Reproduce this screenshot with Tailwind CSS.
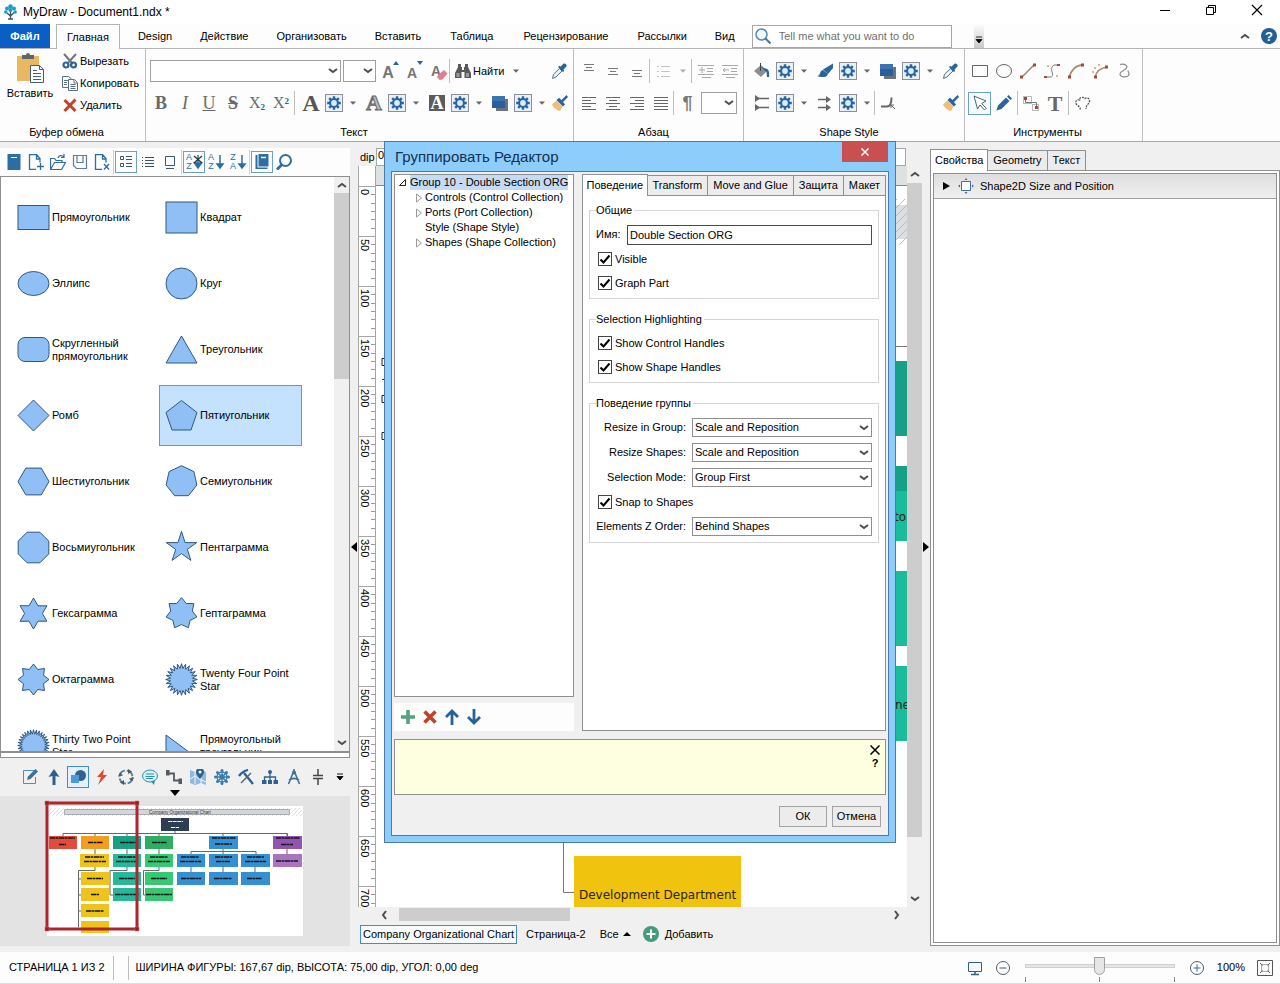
<!DOCTYPE html>
<html lang="ru">
<head>
<meta charset="utf-8">
<title>MyDraw - Document1.ndx *</title>
<script src="https://cdn.jsdelivr.net/npm/@tailwindcss/browser@4"></script>
</head>
<body class="relative flex h-screen min-h-[900px] flex-col overflow-hidden bg-[#f0f0f0] font-['Liberation_Sans',Arial,sans-serif] text-[11px] leading-[13px] text-black">

<!-- Icon library -->
<svg class="hidden" aria-hidden="true">
  <symbol id="gear" viewBox="0 0 18 18">
    <rect x=".5" y=".5" width="17" height="17" fill="#e9f1f8" stroke="#8a9099"/>
    <path d="M9 2.2v13.6M2.2 9h13.6M4.2 4.2l9.6 9.6M13.8 4.2l-9.6 9.6" stroke="#2b639c" stroke-width="2.4"/>
    <circle cx="9" cy="9" r="4.9" fill="#2b639c"/><circle cx="9" cy="9" r="2.9" fill="#d8ebfa"/>
  </symbol>
  <symbol id="caret" viewBox="0 0 8 8"><path d="M1 2.5h6L4 5.8z" fill="#666"/></symbol>
  <symbol id="chev" viewBox="0 0 10 8"><path d="M1 2l4 3 4-3" fill="none" stroke="#4d4d4d" stroke-width="2"/></symbol>
  <symbol id="dropper" viewBox="0 0 16 16">
    <path d="M1.500 15.500l1-4.300L8.500 5.500l2.500 2.500-6 6z" fill="#e4eef5" stroke="#5c7488"/>
    <path d="M7 4l5 5 1.300-1.300-.9-1 3-3.200c1-1.600-1.300-3.800-2.900-2.700l-3.100 3-1.100-1z" fill="#2b639c"/>
  </symbol>
  <symbol id="brush" viewBox="0 0 16 16">
    <path d="M0 9.500l4.500-4 6 6L8 16c-3-.4-7-3.500-8-6.500z" fill="#ecc07a"/>
    <path d="M4.500 5l6.500 6.500 2-2-2-2.500L16 2 14.500 0 9.500 5l-2.500-2.200z" fill="#2b639c"/>
  </symbol>
  <symbol id="stack" viewBox="0 0 16 16">
    <path d="M4 4h12v12H4z" fill="#6a7480"/><path d="M0 1h13v12H0z" fill="#2b5f9a"/><path d="M0 1h13v5H0z" fill="#3a74b2"/>
  </symbol>
  <symbol id="lens" viewBox="0 0 16 16"><circle cx="9.500" cy="6.500" r="5.500" fill="none" stroke="#2d6da3" stroke-width="2"/><path d="M6 10.500L1 15.500" stroke="#2d6da3" stroke-width="2.800"/></symbol>
</svg>

<!-- Title bar -->
<header class="flex h-6 shrink-0 items-center bg-white pl-[3px]">
  <svg class="size-4" viewBox="0 0 16 16"><path d="M7.500 6v9M4 9l3.500 3L11 8.500M5 15h5" stroke="#3b5566" fill="none" stroke-width="1.300"/><g fill="#1c9bc4"><circle cx="7.500" cy="2.500" r="2.200"/><circle cx="4" cy="4.500" r="2"/><circle cx="11" cy="4.500" r="2"/><circle cx="7.500" cy="6" r="2"/><circle cx="2.800" cy="8" r="1.700"/><circle cx="12.200" cy="8" r="1.700"/></g></svg>
  <h1 class="ml-1 text-xs">MyDraw - Document1.ndx *</h1>
  <div class="ml-auto flex pb-1">
    <button aria-label="Свернуть" class="grid h-5 w-[46px] place-items-center"><svg class="size-3" viewBox="0 0 12 12"><path d="M1 6.500h10" stroke="#000"/></svg></button>
    <button aria-label="Восстановить" class="grid h-5 w-[46px] place-items-center"><svg class="size-3" viewBox="0 0 12 12"><path d="M1.500 3.500h7v7h-7zM3.500 3V1.500h7v7H9" fill="none" stroke="#000"/></svg></button>
    <button aria-label="Закрыть" class="grid h-5 w-[46px] place-items-center"><svg class="size-3" viewBox="0 0 12 12"><path d="M1 1l10 10M11 1L1 11" stroke="#000" stroke-width="1.200"/></svg></button>
  </div>
</header>

<!-- Ribbon tabs -->
<nav class="flex h-[25px] shrink-0 items-center border-b border-[#b4b4b4] bg-[#fdfdfd]">
  <button class="mr-1.5 h-6 w-[50px] bg-[#0a5fc4] font-bold text-white">Файл</button>
  <button class="-mb-px h-[25px] border border-b-0 border-[#b4b4b4] bg-[#fdfdfd] px-2.5">Главная</button>
  <button class="ml-1 px-[14px]">Design</button>
  <button class="px-[14px]">Действие</button>
  <button class="px-[14px]">Организовать</button>
  <button class="px-[14px]">Вставить</button>
  <button class="px-[15px]">Таблица</button>
  <button class="px-[15px]">Рецензирование</button>
  <button class="px-[14px]">Рассылки</button>
  <button class="pr-[17px] pl-[14px]">Вид</button>
  <label class="flex h-[23px] w-[200px] items-center border border-[#a6a6a6] bg-white pl-0.5">
    <svg class="size-4" viewBox="0 0 16 16"><circle cx="6.500" cy="6.500" r="5.500" fill="#f2f8fc" stroke="#4f8bbb" stroke-width="1.500"/><path d="M10.500 10.500l5 5" stroke="#55718a" stroke-width="2"/></svg>
    <input aria-label="Поиск команд" placeholder="Tell me what you want to do" class="ml-2 min-w-0 flex-1 bg-transparent outline-none placeholder:text-[#707070]">
  </label>
  <button aria-label="Настроить панель" class="ml-[22px] flex h-6 w-2.5 items-end justify-center bg-linear-to-b from-[#fdfdfd] to-[#c9c9c9] pb-1"><svg class="size-2" viewBox="0 0 8 8"><path d="M1 1h6M1 3.500h6L4 7z" stroke="#000" stroke-width=".8"/></svg></button>
  <button aria-label="Свернуть ленту" class="mr-[11px] ml-auto"><svg class="h-2 w-2.5 rotate-180" viewBox="0 0 10 8"><use href="#chev"/></svg></button>
  <button aria-label="Справка" class="mr-[3px] grid size-4 place-items-center rounded-full bg-[#225f97] text-[13px] font-bold text-white">?</button>
</nav>

<!-- Ribbon -->
<section class="flex h-[93px] shrink-0 border-b border-[#a9a9a9] bg-[#fdfdfd]">
  <div class="flex w-[146px] flex-col border-r border-[#bdbdbd]">
    <div class="flex h-[75px] pt-px">
      <button class="flex w-[60px] flex-col items-center pt-[3px]">
        <svg class="h-8 w-[30px]" viewBox="0 0 30 32"><path d="M2 3h22v25H2z" fill="#e9b863"/><path d="M7 6V2h4a2 2 0 0 1 4 0h4v4z" fill="#5f6469"/><path d="M15.500 12.500h9l4 4v13h-13z" fill="#fff" stroke="#44617c"/><path d="M24.500 12.500v4h4M18 17.500h4M18 20.500h8M18 23.500h8M18 26.500h8" stroke="#44617c" fill="none"/></svg>
        <span class="mt-0.5">Вставить</span>
      </button>
      <div class="flex flex-col">
        <button class="flex h-[22px] items-center gap-0.5 pl-0.5"><svg class="size-4" viewBox="0 0 16 16"><path d="M2 1l9 10M14 1L5 11" stroke="#70767c" stroke-width="2"/><circle cx="4" cy="12" r="2.500" fill="none" stroke="#2b639c" stroke-width="2.200"/><circle cx="11.500" cy="12" r="2.500" fill="none" stroke="#2b639c" stroke-width="2.200"/></svg>Вырезать</button>
        <button class="flex h-[22px] items-center gap-0.5 pl-0.5"><svg class="size-4" viewBox="0 0 16 16"><path d="M.5 1.500h6l2.500 2v9H.5zM2 5.500h4M2 7.500h3M2 9.500h3" fill="none" stroke="#587089"/><path d="M6.500 4.500h6l3 3v8h-9z" fill="#fff" stroke="#587089"/><path d="M12 5v3h3M8.500 9.500h5M8.500 11.500h5M8.500 13.500h5" stroke="#587089" fill="none"/></svg>Копировать</button>
        <button class="flex h-[22px] items-center gap-0.5 pl-0.5"><svg class="size-4" viewBox="0 0 16 16"><path d="M2.500 3l11 11M13.500 2.500L2.500 14" stroke="#c1432e" stroke-width="3"/></svg>Удалить</button>
      </div>
    </div>
    <div class="-ml-3 pt-0.5 text-center">Буфер обмена</div>
  </div>

  <div class="flex w-[428px] flex-col border-r border-[#bdbdbd] pt-1.5">
    <div class="flex h-8 items-center pl-1">
      <div class="relative"><select aria-label="Шрифт" class="block h-[22px] w-[191px] appearance-none border border-[#a0a0a0] bg-white"><option></option></select><svg class="pointer-events-none absolute top-[7px] right-[3px] h-2 w-2.5"><use href="#chev"/></svg></div>
      <div class="relative ml-0.5"><select aria-label="Размер" class="block h-[22px] w-[33px] appearance-none border border-[#a0a0a0] bg-white"><option></option></select><svg class="pointer-events-none absolute top-[7px] right-[3px] h-2 w-2.5"><use href="#chev"/></svg></div>
      <button aria-label="Увеличить шрифт" class="relative h-6 w-6 pt-0.5 text-base font-bold text-[#757575]">A<svg class="absolute top-0.5 right-0 h-1 w-2" viewBox="0 0 8 4"><path d="M1 4h6L4 0z" fill="#2b639c"/></svg></button>
      <button aria-label="Уменьшить шрифт" class="relative h-6 w-6 pt-1 text-sm font-bold text-[#757575]">A<svg class="absolute top-0.5 right-0 h-1 w-2" viewBox="0 0 8 4"><path d="M1 0h6L4 4z" fill="#2b639c"/></svg></button>
      <button aria-label="Очистить формат" class="relative h-6 w-6 text-sm font-bold text-[#757575]">A<svg class="absolute right-0 bottom-0.5 size-3" viewBox="0 0 12 12"><path d="M2 6l6-5 3.500 3.500-5 6-3 .5L1 8z" fill="#de7f92"/></svg></button>
      <i class="mr-[5px] ml-px h-6 w-px bg-[#bdbdbd]"></i>
      <button class="flex items-center gap-0.5"><svg class="size-4" viewBox="0 0 16 16" fill="#595959"><path d="M3 1h3v3h1v3h2V4h1V1h3v3l3 6v5H9.500V9h-3v6H0v-5l3-6z"/><path d="M1.500 11h3M11 11h3M1.500 13h3M11 13h3" stroke="#ddd"/></svg>Найти<svg class="ml-1.5 size-2"><use href="#caret"/></svg></button>
      <button aria-label="Пипетка" class="mr-1.5 ml-auto"><svg class="size-4"><use href="#dropper"/></svg></button>
    </div>
    <div class="flex h-8 items-center pl-1 font-['Liberation_Serif',serif] text-lg text-[#6a6a6a]">
      <button class="w-6 pr-0.5 font-bold">B</button><button class="w-6 pr-0.5 italic">I</button><button class="w-6 pr-0.5 underline">U</button><button class="w-6 pr-0.5 font-bold line-through">S</button>
      <button class="w-6 pr-0.5 text-base">X<sub class="text-[9px] font-bold text-[#2b639c]">2</sub></button><button class="w-6 pr-0.5 text-base">X<sup class="text-[9px] font-bold text-[#2b639c]">2</sup></button>
      <i class="h-6 w-px bg-[#bdbdbd]"></i>
      <div class="flex w-[63px] items-center pl-0.5"><button class="w-7 text-2xl font-bold text-[#555]">A</button><svg class="size-[18px]"><use href="#gear"/></svg><svg class="ml-1.5 size-2"><use href="#caret"/></svg></div>
      <div class="flex w-[63px] items-center pl-0.5"><button class="w-7 text-[22px] font-bold text-[#bbb] [-webkit-text-stroke:1px_#666]">A</button><svg class="size-[18px]"><use href="#gear"/></svg><svg class="ml-1.5 size-2"><use href="#caret"/></svg></div>
      <div class="flex w-[63px] items-center pl-0.5"><button class="flex w-7 justify-center"><span class="h-4 w-4 bg-[#5c5c5c] text-lg leading-4 font-bold text-white">A</span></button><svg class="size-[18px]"><use href="#gear"/></svg><svg class="ml-1.5 size-2"><use href="#caret"/></svg></div>
      <div class="flex w-[63px] items-center pl-0.5"><button aria-label="Тень" class="flex w-7 justify-center"><svg class="size-4"><use href="#stack"/></svg></button><svg class="size-[18px]"><use href="#gear"/></svg><svg class="ml-1.5 size-2"><use href="#caret"/></svg></div>
      <button aria-label="Кисть" class="ml-[5px]"><svg class="size-4"><use href="#brush"/></svg></button>
    </div>
    <div class="pt-[7px] pr-[11px] text-center">Текст</div>
  </div>

  <div class="flex w-[170px] flex-col border-r border-[#bdbdbd] pt-1.5">
    <div class="flex h-8 items-center pl-[3px]">
      <button aria-label="По верху" class="grid w-6 place-items-center"><svg class="size-4" viewBox="0 0 16 16"><path d="M3 1.500h10M5 4.500h6M3 7.500h10" stroke="#777"/></svg></button>
      <button aria-label="По середине" class="grid w-6 place-items-center"><svg class="size-4" viewBox="0 0 16 16"><path d="M3 5.500h10M5 8.500h6M3 11.500h10" stroke="#777"/></svg></button>
      <button aria-label="По низу" class="grid w-6 place-items-center"><svg class="size-4" viewBox="0 0 16 16"><path d="M3 7.500h10M5 10.500h6M3 13.500h10" stroke="#777"/></svg></button>
      <i class="h-6 w-px bg-[#bdbdbd]"></i>
      <button aria-label="Список" class="flex w-[41px] items-center justify-end gap-2 pr-1"><svg class="size-4" viewBox="0 0 16 16"><path d="M6 3.500h9M6 8.500h9M6 13.500h9M2 3.500h2M2 8.500h2M2 13.500h2" stroke="#c4c4c4"/></svg><svg class="size-2 opacity-50"><use href="#caret"/></svg></button>
      <i class="h-6 w-px bg-[#bdbdbd]"></i>
      <button aria-label="Уменьшить отступ" class="grid w-6 place-items-center pl-1"><svg class="size-4" viewBox="0 0 16 16"><path d="M0 2.500h16M9 5.500h6M9 8.500h6M0 11.500h16M4 14.500h9M1 7h6M4 4v6" stroke="#a8a8a8"/></svg></button>
      <button aria-label="Увеличить отступ" class="grid w-6 place-items-center pl-1"><svg class="size-4" viewBox="0 0 16 16"><path d="M0 2.500h16M9 5.500h6M9 8.500h6M0 11.500h16M4 14.500h9M1 7h6M3 5L1 7l2 2" stroke="#a8a8a8" fill="none"/></svg></button>
    </div>
    <div class="flex h-8 items-center pl-[3px]">
      <button aria-label="Влево" class="grid w-6 place-items-center"><svg class="size-4" viewBox="0 0 16 16"><path d="M1 2.500h14M1 5.500h9M1 8.500h14M1 11.500h9M1 14.500h14" stroke="#666"/></svg></button>
      <button aria-label="По центру" class="grid w-6 place-items-center"><svg class="size-4" viewBox="0 0 16 16"><path d="M1 2.500h14M4 5.500h8M1 8.500h14M4 11.500h8M1 14.500h14" stroke="#666"/></svg></button>
      <button aria-label="Вправо" class="grid w-6 place-items-center"><svg class="size-4" viewBox="0 0 16 16"><path d="M1 2.500h14M6 5.500h9M1 8.500h14M6 11.500h9M1 14.500h14" stroke="#666"/></svg></button>
      <button aria-label="По ширине" class="grid w-6 place-items-center"><svg class="size-4" viewBox="0 0 16 16"><path d="M1 2.500h14M1 5.500h14M1 8.500h14M1 11.500h14M1 14.500h14" stroke="#666"/></svg></button>
      <i class="h-6 w-px bg-[#bdbdbd]"></i>
      <button class="w-[27px] text-lg font-bold text-[#777]">¶</button>
      <div class="relative"><select aria-label="Интервал" class="block h-[22px] w-9 appearance-none border border-[#a0a0a0] bg-white"><option></option></select><svg class="pointer-events-none absolute top-[7px] right-[3px] h-2 w-2.5"><use href="#chev"/></svg></div>
    </div>
    <div class="pt-[7px] pr-2.5 text-center">Абзац</div>
  </div>

  <div class="flex w-[221px] flex-col border-r border-[#bdbdbd] pt-1.5">
    <div class="flex h-8 items-center pl-1">
      <div class="flex w-[63px] items-center"><button aria-label="Заливка" class="flex w-7 justify-center"><svg class="size-4" viewBox="0 0 16 16"><path d="M0 8l7-6 6 6-6 6z" fill="#8b8f94"/><path d="M6.500 0v8" stroke="#444"/><path d="M7 4l6 2c2 1 2.500 4 2 8h-2l-.5-5z" fill="#2b639c"/></svg></button><svg class="size-[18px]"><use href="#gear"/></svg><svg class="ml-1.5 size-2"><use href="#caret"/></svg></div>
      <div class="flex w-[63px] items-center"><button aria-label="Контур" class="flex w-7 justify-center"><svg class="size-4" viewBox="0 0 16 16"><path d="M0 13c4 0 2-5 6-6l5 4c-1 4-7 3.500-11 2z" fill="#2b639c"/><path d="M6 6.500l10-6V5l-5 6z" fill="#2b639c"/></svg></button><svg class="size-[18px]"><use href="#gear"/></svg><svg class="ml-1.5 size-2"><use href="#caret"/></svg></div>
      <div class="flex w-[63px] items-center"><button aria-label="Тень фигуры" class="flex w-7 justify-center"><svg class="size-4"><use href="#stack"/></svg></button><svg class="size-[18px]"><use href="#gear"/></svg><svg class="ml-1.5 size-2"><use href="#caret"/></svg></div>
      <button aria-label="Пипетка фигуры" class="ml-[5px]"><svg class="size-4"><use href="#dropper"/></svg></button>
    </div>
    <div class="flex h-8 items-center pl-1">
      <div class="flex w-[63px] items-center"><button aria-label="Начало стрелки" class="flex w-7 justify-center"><svg class="size-4" viewBox="0 0 16 16"><path d="M3 3.500h12M3 12.500h12" stroke="#666" stroke-width="1.500"/><path d="M1 0l5 3.500L1 7zM1 9l5 3.500L1 16z" fill="#666"/></svg></button><svg class="size-[18px]"><use href="#gear"/></svg><svg class="ml-1.5 size-2"><use href="#caret"/></svg></div>
      <div class="flex w-[63px] items-center"><button aria-label="Конец стрелки" class="flex w-7 justify-center"><svg class="size-4" viewBox="0 0 16 16"><path d="M1 4.500h10M1 12.500h10" stroke="#666" stroke-width="1.500"/><path d="M9 1l5 3.500L9 8zM9 9l5 3.500L9 16z" fill="#666"/></svg></button><svg class="size-[18px]"><use href="#gear"/></svg><svg class="ml-1.5 size-2"><use href="#caret"/></svg></div>
      <i class="h-6 w-px bg-[#bdbdbd]"></i>
      <button aria-label="Скругление" class="ml-1.5"><svg class="size-4" viewBox="0 0 16 16"><path d="M0 11.500h6c3 0 4.500-2 4.500-9" fill="none" stroke="#666" stroke-width="2"/><path d="M10 10l4 4M10 13v-3h3" fill="none" stroke="#666"/></svg></button>
      <button aria-label="Кисть фигуры" class="mr-[5px] ml-auto"><svg class="size-4"><use href="#brush"/></svg></button>
    </div>
    <div class="pt-[7px] pr-2.5 text-center">Shape Style</div>
  </div>

  <div class="flex w-[178px] flex-col border-r border-[#bdbdbd] pt-1.5">
    <div class="flex h-8 items-center pl-[3px]">
      <button aria-label="Прямоугольник" class="grid w-6 place-items-center"><svg class="size-4" viewBox="0 0 16 16"><path d="M.5 2.500h15v11H.5z" fill="none" stroke="#666"/></svg></button>
      <button aria-label="Эллипс" class="grid w-6 place-items-center"><svg class="size-4" viewBox="0 0 16 16"><ellipse cx="8" cy="8" rx="7.500" ry="6.500" fill="none" stroke="#666"/></svg></button>
      <button aria-label="Линия" class="grid w-6 place-items-center"><svg class="size-4" viewBox="0 0 16 16"><path d="M2 14L14 2" stroke="#a57d6b" stroke-width="1.500"/><path d="M0 12.500h3v3H0zM13 .5h3v3h-3z" fill="#a5473a"/></svg></button>
      <button aria-label="Полилиния" class="grid w-6 place-items-center"><svg class="size-4" viewBox="0 0 16 16"><path d="M1 14h5c3 0 3-2 2-5s0-7 3-7h4" stroke="#777" fill="none"/><path d="M0 13h3v2H0zM13 1h3v2h-3z" fill="#a5473a"/><path d="M3 2h2v2H3zM12 12h2v2h-2z" fill="#e5b87a"/></svg></button>
      <button aria-label="Дуга" class="grid w-6 place-items-center"><svg class="size-4" viewBox="0 0 16 16"><path d="M1.500 14C3 7 8 2 15 2" stroke="#a98b72" stroke-width="1.800" fill="none"/><path d="M0 12.500h3v3H0zM13 .5h3v3h-3z" fill="#a5473a"/></svg></button>
      <button aria-label="Кривая" class="grid w-6 place-items-center"><svg class="size-4" viewBox="0 0 16 16"><path d="M3.500 14C4 8 9 5 15 4" stroke="#a98b72" stroke-width="1.500" fill="none"/><path d="M2 12.500h3v3H2zM13 2.500h3v3h-3z" fill="#a5473a"/><path d="M6 1h2v2H6zM2 4h2v2H2zM0 8h2v2H0z" fill="#e5b87a"/></svg></button>
      <button aria-label="Свободная кривая" class="grid w-6 place-items-center"><svg class="size-4" viewBox="0 0 16 16"><path d="M4 1.500c5-1 8 1 6.500 3.500S4 8 4 11s7 4 8.500 1.500-.5-3-.5-5" stroke="#888" stroke-width="1.200" fill="none"/></svg></button>
    </div>
    <div class="flex h-8 items-center pl-[3px]">
      <button aria-label="Указатель" class="grid size-[23px] place-items-center border border-[#6ba0cb] bg-[#f5fafd]"><svg class="size-4" viewBox="0 0 16 16"><path d="M2 1l3.500 13L8 10l4.500 5 1.700-1.700-4.500-4.800L14 6z" fill="#fff" stroke="#4d6478"/></svg></button>
      <button aria-label="Карандаш" class="grid w-[26px] place-items-center"><svg class="size-4" viewBox="0 0 16 16"><path d="M.5 15.500l1.500-5 8-8 3.500 3.500-8 8zM11 1.500L12.500 0 16 3.500 14.500 5z" fill="#2b639c"/></svg></button>
      <i class="h-6 w-px bg-[#bdbdbd]"></i>
      <button aria-label="Соединитель" class="grid w-[26px] place-items-center"><svg class="size-4" viewBox="0 0 16 16"><path d="M.5 1.500h8v7h-8zM9.500 9.500h6v6h-6z" fill="none" stroke="#777" stroke-dasharray="1 1"/><path d="M2.500 4v3.500h11V12" fill="none" stroke="#777"/><path d="M1 2h3v3H1zM12 11h3v3h-3z" fill="#a5473a"/></svg></button>
      <button class="w-6 pr-0.5 font-['Liberation_Serif',serif] text-[22px] font-bold text-[#686868]">T</button>
      <i class="h-6 w-px bg-[#bdbdbd]"></i>
      <button aria-label="Лассо" class="grid w-7 place-items-center"><svg class="size-4" viewBox="0 0 16 16"><path d="M5 14.500c1-2-1-3-3-4.500-3-3 0-6 2.500-5C4 2 9 1.500 10 3.500c2-1.500 5 0 4.500 3C14 9 11 10 11 14" fill="none" stroke="#555" stroke-width="1.300" stroke-dasharray="2 1"/></svg></button>
    </div>
    <div class="pt-[7px] pr-3 text-center">Инструменты</div>
  </div>
</section>

<!-- Workspace -->
<main class="flex min-h-0 flex-1 pt-1.5 pb-1.5">

  <aside class="flex w-[350px] shrink-0 flex-col">
    <div class="flex h-[28px] items-center bg-[#fdfdfd] pl-[3px] text-[#2d6da3]">
      <button aria-label="Библиотека" class="grid size-[22px] place-items-center"><svg class="size-4" viewBox="0 0 16 16"><path d="M1.500 0h13v16h-13z" fill="#2d6da3"/><path d="M5 3.500h6" stroke="#fff"/></svg></button>
      <button aria-label="Новая" class="grid size-[22px] place-items-center"><svg class="size-4" viewBox="0 0 16 16"><path d="M8 15.500H1.500v-15h7l3.500 4v4M8.500 .5v4.500H12M12.500 9v7M9 12.500h7" fill="none" stroke="currentColor" stroke-width="1.300"/></svg></button>
      <button aria-label="Открыть" class="grid size-[22px] place-items-center"><svg class="size-4" viewBox="0 0 16 16"><path d="M.5 15.500v-11h4l1.500 2h6v2M.5 15.500l4-7h11l-4 7zM8 4c1-3 4-3 6-1M14 0v3.500h-3" fill="none" stroke="currentColor" stroke-width="1.200"/></svg></button>
      <button aria-label="Сохранить" class="grid size-[22px] place-items-center"><svg class="size-4" viewBox="0 0 16 16"><path d="M1.500 1.500h13v13h-10l-3-3zM5 1.500v7h6v-7" fill="none" stroke="#5d7d99" stroke-width="1.200"/></svg></button>
      <button aria-label="Закрыть" class="grid size-[22px] place-items-center"><svg class="size-4" viewBox="0 0 16 16"><path d="M8 15.500H1.500v-15h7l3.500 4v4M8.500 .5v4.500H12M10 10l5 5.500M15 10l-5 5.500" fill="none" stroke="currentColor" stroke-width="1.300"/></svg></button>
      <i class="mr-px h-6 w-px bg-[#c3d3df]"></i>
      <button aria-label="Значки и подписи" class="grid size-[22px] place-items-center border border-[#6ba0cb]"><svg class="size-4" viewBox="0 0 16 16"><path d="M2.500 2.500h3v3h-3zM2.500 9.500h3v3h-3zM8 2.500h6M8 5.500h6M8 9.500h6M8 12.500h6" fill="none" stroke="#3e566b"/></svg></button>
      <button aria-label="Список" class="grid size-[22px] place-items-center"><svg class="size-4" viewBox="0 0 16 16"><path d="M5 3.500h9M5 6.500h9M5 9.500h9M5 12.500h9M2 3.500h1M2 6.500h1M2 9.500h1M2 12.500h1" stroke="#3e566b"/></svg></button>
      <button aria-label="Значки" class="grid size-[22px] place-items-center"><svg class="size-4" viewBox="0 0 16 16"><path d="M3.500 2.500h9v9h-9zM4 14.500h8" fill="none" stroke="#3e566b"/></svg></button>
      <i class="mr-px h-6 w-px bg-[#c3d3df]"></i>
      <button class="flex size-[22px] items-center justify-center border border-[#6ba0cb] text-[9px] leading-[9px]"><span class="w-2">A<br>Z</span><svg class="h-4 w-2.5" viewBox="0 0 10 16"><path d="M5 1v12M1.500 9L5 14l3.500-5z" fill="currentColor" stroke="currentColor" stroke-width="1.500"/><path d="M1 2l8 7M9 2L1 9" stroke="#233" stroke-width="1.200"/></svg></button>
      <button class="flex size-[22px] items-center justify-center text-[9px] leading-[9px]"><span class="w-2">A<br>Z</span><svg class="h-4 w-2.5" viewBox="0 0 10 16"><path d="M5 1v12M2 10l3 4 3-4z" fill="currentColor" stroke="currentColor" stroke-width="1.500"/></svg></button>
      <button class="flex size-[22px] items-center justify-center text-[9px] leading-[9px]"><span class="w-2">Z<br>A</span><svg class="h-4 w-2.5" viewBox="0 0 10 16"><path d="M5 1v12M2 10l3 4 3-4z" fill="currentColor" stroke="currentColor" stroke-width="1.500"/></svg></button>
      <i class="mr-px h-6 w-px bg-[#c3d3df]"></i>
      <button aria-label="Библиотеки" class="grid size-[22px] place-items-center border border-[#6ba0cb]"><svg class="size-4" viewBox="0 0 16 16"><path d="M1.500 1h2v12.500h10V15h-12z" fill="#2d6da3"/><path d="M4.500 0h10v12.500h-10z" fill="#2d6da3"/><path d="M7 3.500h5" stroke="#fff" stroke-width="1.500"/></svg></button>
      <button aria-label="Найти фигуру" class="grid size-[22px] place-items-center"><svg class="size-4"><use href="#lens"/></svg></button>
    </div>
    <div class="flex min-h-0 flex-1 border border-b-2 border-[#8f8f8f] bg-white">
      <div class="min-w-0 flex-1 overflow-hidden">
        <ul id="shapes" class="grid grid-cols-[143px_143px] gap-[5px] pt-[10px] pl-[10px]"></ul>
      </div>
      <div class="flex w-[15px] flex-col items-center bg-[#f0f0f0] pb-1">
        <svg class="my-1 h-2 w-2.5 rotate-180"><use href="#chev"/></svg>
        <div class="h-[186px] w-full bg-[#cdcdcd]"></div>
        <svg class="mt-auto h-2 w-2.5"><use href="#chev"/></svg>
      </div>
    </div>
    <div class="h-[5px] border border-t-0 border-[#8f8f8f] bg-white"></div>
    <div class="relative flex h-[38px] items-center pl-[18px]">
      <button aria-label="Правка" class="grid size-6 place-items-center"><svg class="size-4" viewBox="0 0 16 16"><path d="M12 1.500H1.500v13h12V8" fill="none" stroke="#4e8ebf"/><path d="M5 11l1-3.500L13.500 0 16 2.500 8.500 10z" fill="#3f6f95"/></svg></button>
      <button aria-label="Стрелки" class="grid size-6 place-items-center"><svg class="size-4" viewBox="0 0 16 16"><path d="M8 0l5.500 8L9.500 7v9h-3V7l-4 1z" fill="#325f8a"/></svg></button>
      <button aria-label="Базовые фигуры" class="grid size-6 place-items-center"><span class="grid size-[22px] place-items-center border border-[#3f8fcd] bg-[#e5f1fa]"><svg class="size-4" viewBox="0 0 16 16"><circle cx="10.500" cy="6.500" r="5.500" fill="#33628d"/><path d="M1 6h8v8H1z" fill="#4b9bdb"/></svg></span></button>
      <button aria-label="Электрика" class="grid size-6 place-items-center"><svg class="size-4" viewBox="0 0 16 16"><path d="M10 0L3 8h4l-3 8 9-10H9z" fill="#e5482d"/></svg></button>
      <button aria-label="Цикл" class="grid size-6 place-items-center"><svg class="size-4" viewBox="0 0 16 16"><circle cx="8" cy="8" r="6.500" fill="none" stroke="#4d7ea6" stroke-width="1.800" stroke-dasharray="8.200 2"/><path d="M10 0l4 2.500L10 5zM16 8.500l-2 4-3-3zM6 16l-4-2.500L6 11zM0 7.500l2-4 3 3z" fill="#55585c"/></svg></button>
      <button aria-label="Выноски" class="grid size-6 place-items-center"><svg class="size-4" viewBox="0 0 16 16"><ellipse cx="8" cy="7" rx="7.500" ry="6" fill="#d9f0f4" stroke="#2e8fae"/><path d="M9 12.500l3 3.500 1-5z" fill="#2e8fae"/><path d="M4 5h8M3.500 7.500h9M4 9.500h7" stroke="#2e8fae"/></svg></button>
      <button aria-label="Соединители" class="grid size-6 place-items-center"><svg class="size-4" viewBox="0 0 16 16"><path d="M2 4.500h6v7h6" fill="none" stroke="#545a60" stroke-width="1.800"/><path d="M0 1h3.500v5.500H0zM12.500 9.500H16V15h-3.500z" fill="#545a60"/></svg></button>
      <button aria-label="Карты" class="grid size-6 place-items-center"><svg class="size-4" viewBox="0 0 16 16"><path d="M0 1l5 2 6-2 5 2v13l-5-2-6 2-5-2z" fill="#8dbbe0"/><path d="M5 3v12M0 10l5-3 4 3 7 3M11 9v6" stroke="#f0f5fa" fill="none"/><path d="M10 10C8 7 6 5 6 3a4 4 0 0 1 8 0c0 2-2 4-4 7z" fill="#2d5f8f"/><circle cx="10" cy="3" r="1.500" fill="#fff"/></svg></button>
      <button aria-label="Сеть" class="grid size-6 place-items-center"><svg class="size-4" viewBox="0 0 16 16"><g fill="none" stroke="#397cb1" stroke-width="1.300"><circle cx="8" cy="8" r="2"/><circle cx="8" cy="8" r="5"/><path d="M8 1v14M1 8h14M3 3l10 10M13 3L3 13"/></g><g fill="#397cb1"><circle cx="8" cy="1.500" r="1.500"/><circle cx="8" cy="14.500" r="1.500"/><circle cx="1.500" cy="8" r="1.500"/><circle cx="14.500" cy="8" r="1.500"/><circle cx="3.500" cy="3.500" r="1.500"/><circle cx="12.500" cy="3.500" r="1.500"/><circle cx="3.500" cy="12.500" r="1.500"/><circle cx="12.500" cy="12.500" r="1.500"/></g></svg></button>
      <button aria-label="Инструменты" class="grid size-6 place-items-center"><svg class="size-4" viewBox="0 0 16 16"><path d="M1 7c2-3 5-5 9-6M6 4l9 11" stroke="#2d6192" fill="none" stroke-width="2.300"/><path d="M13 4L3 14" stroke="#5d6266" stroke-width="1.500"/></svg></button>
      <button aria-label="Организация" class="grid size-6 place-items-center"><svg class="size-4" viewBox="0 0 16 16"><path d="M8 3v9M2.500 12V8h11v4" fill="none" stroke="#2d6192" stroke-width="1.300"/><circle cx="8" cy="3" r="2" fill="#2d6192"/><path d="M0 11h4.500v4H0zM6 11h4v4H6zM11.500 11H16v4h-4.500z" fill="#2d6192"/></svg></button>
      <button aria-label="Циркуль" class="grid size-6 place-items-center"><svg class="size-4" viewBox="0 0 16 16"><path d="M8 0v3M7 4L2.500 15M9 4l4.500 11M3 11c3-2 7-2 10 0" fill="none" stroke="#466e93" stroke-width="1.600"/><circle cx="8" cy="3.500" r="2" fill="#466e93"/></svg></button>
      <button aria-label="Схемы" class="grid size-6 place-items-center"><svg class="size-4" viewBox="0 0 16 16"><path d="M8 0v6M8 10v6M3 6.500h10M3 9.500h10" stroke="#444" stroke-width="1.500"/></svg></button>
      <button aria-label="Ещё" class="grid h-6 w-5 place-items-center"><svg class="size-2" viewBox="0 0 8 8"><path d="M1 1h6M1 3.500h6L4 7z" stroke="#000" stroke-width=".9"/></svg></button>
      <svg class="absolute bottom-0 left-[169px] h-[6px] w-3" viewBox="0 0 12 6"><path d="M1 0h10L6 6z"/></svg>
    </div>
    <div class="flex h-[150px] justify-center bg-[#e3e3e3]">
      <svg class="h-[150px] w-[350px]" viewBox="0 796 350 150">
        <defs><pattern id="hatch" width="4" height="4" patternUnits="userSpaceOnUse"><path d="M0 4L4 0" stroke="#c6c9cc" stroke-width=".6"/></pattern></defs>
        <path d="M47 806h256v130H47z" fill="#fff"/>
        <path d="M48 808h254v8H48z" fill="url(#hatch)"/><path d="M64.500 809.500h225v5h-225z" fill="#d3d6d9" stroke="#a9adb1"/>
        <text x="149" y="814" font-size="4.500" fill="#333">Company Organizational Chart</text>
        <path d="M175 830v3M63 836v-2.500h224.500v2.500M95 834v20M127 834v20M159 834v20M223 834v17M287 834v20M191 854v-2.500h65v2.500M223 851v24M191 867v5M255 867v5M95 866v4.500H78.500V927M127 867v3.500h-17V895h4M159 867v3.500h-15.500V895h3M78 879h4M78 895h4M78 911h4" fill="none" stroke="#666"/>
        <path d="M161 818h28v13h-28z" fill="#2c3e50"/>
        <path d="M49 836h28v13H49z" fill="#e04d3c"/>
        <path d="M81 836h28v13H81z" fill="#f39c1f"/>
        <path d="M80 854h29v13H80zM81 872h28v13H81zM81 888h28v13H81zM81 904h28v13H81zM81 921h28v12H81z" fill="#eec31c"/>
        <path d="M113 836h28v13h-28z" fill="#1b9f85"/>
        <path d="M113 854h28v13h-28zM113 872h28v13h-28zM113 888h28v13h-28z" fill="#25b99a"/>
        <path d="M145 836h28v13h-28z" fill="#2eae63"/>
        <path d="M145 854h28v13h-28zM145 872h28v13h-28zM145 888h28v13h-28z" fill="#37c972"/>
        <path d="M209 836h29v13h-29zM177 854h28v13h-28zM209 854h29v13h-29zM241 854h29v13h-29zM177 872h28v13h-28zM209 872h29v13h-29zM241 872h29v13h-29z" fill="#3490d2"/>
        <path d="M273 836h29v13h-29z" fill="#9353b0"/><path d="M273 854h29v13h-29z" fill="#a873c0"/>
        <path d="M168 821.500h15M171 827.500h8" stroke="#fff" stroke-width="1.200" stroke-dasharray="4 .6"/>
        <path d="M50 838h25M59 844.500h7M88 842.500h15M120 842.500h16M152 842.500h15M212 838h24M215 844h17M276 838h24M281 844.500h12M85 857h19M84 861.500h22M118 857h18M116 861.500h22M150 857h18M148 861.500h22M181 857h18M180 861.500h21M215 857h17M216 861.500h14M247 857h17M245 861.500h21M276 861h22M87 878.500h16M119 878.500h16M151 878.500h16M181 878.500h20M214 878.500h18M247 878.500h15M91 894.500h8M115 894.500h24M146 894.500h26M86 911h18" stroke="#14181c" stroke-width="1.300" stroke-dasharray="5 .5 3 .5"/>
        <rect x="47" y="803" width="90" height="126" fill="none" stroke="#b0242c" stroke-width="3"/>
        <path d="M45 801h4v4h-4zM135 801h4v4h-4zM45 927h4v4h-4zM135 927h4v4h-4z" fill="#9d1b22" stroke="#d66" stroke-width=".5"/>
      </svg>
    </div>
  </aside>

  <div class="grid w-2 shrink-0 place-items-center"><svg class="h-2.5 w-[6px]" viewBox="0 0 6 10"><path d="M6 0v10L0 5z"/></svg></div>

  <!-- Drawing canvas -->
  <section class="flex min-w-0 flex-1 flex-col">
    <div class="flex h-[18px]">
      <span class="w-[18px] pt-[3px] pl-0.5">dip</span>
      <div class="flex-1 border border-[#a6a6a6] bg-white pl-px">0</div>
      <div class="w-4"></div>
    </div>
    <div class="flex min-h-0 flex-1">
      <div id="ruler" class="w-[18px] shrink-0 overflow-hidden border-x border-[#a6a6a6] bg-white"></div>
      <div class="relative min-w-0 flex-1 overflow-hidden bg-[#e0e0e0]">
        <svg class="absolute top-0 left-0 h-full w-full" viewBox="376 166 531 741" preserveAspectRatio="xMinYMin slice">
          <defs><pattern id="hatch2" width="8" height="8" patternUnits="userSpaceOnUse"><path d="M0 8L8 0" stroke="#b9bdc2"/></pattern></defs>
          <path d="M376 185.500h531V950H376z" fill="#fff"/><path d="M376 185.500h531" stroke="#888"/>
          <path d="M400 205h507v34H400z" fill="#dcdee0"/><path d="M400 199h507v46H400z" fill="url(#hatch2)"/>
          <path d="M386 346.500h521" stroke="#777"/>
          <path d="M740 361h167v75H740zM740 466h167v25H740z" fill="#16a085"/>
          <path d="M740 491h167v50H740zM740 571h167v75H740zM740 666h167v75H740z" fill="#1abc9c"/>
          <path d="M386 358.500h-4v7h4M386 395.500h-4v7h4M386 432.500h-4v7h4M382 379.500h4" fill="none" stroke="#222"/>
          <path d="M563.500 700v192.500H574" fill="none" stroke="#777"/>
          <path d="M574 856h167v60H574z" fill="#f0c30f"/>
          <g font-family="DejaVu Sans, Noto Sans, sans-serif" font-size="12" fill="#2b2212"><text x="579" y="899">Development Department</text><text x="894" y="521">to</text><text x="895" y="709">ne</text></g>
        </svg>
      </div>
      <div class="flex w-[15px] shrink-0 flex-col items-center bg-[#f0f0f0] pb-1">
        <svg class="mt-1 mb-[5px] h-2 w-2.5 rotate-180"><use href="#chev"/></svg>
        <div class="h-[654px] w-full bg-[#cdcdcd]"></div>
        <svg class="mt-auto h-2 w-2.5"><use href="#chev"/></svg>
      </div>
    </div>
    <div class="flex h-[15px] items-center pr-5 pl-[21px]">
      <svg class="mr-2.5 h-2 w-2.5 rotate-90"><use href="#chev"/></svg>
      <div class="h-[13px] w-[171px] bg-[#cdcdcd]"></div>
      <svg class="ml-auto h-2 w-2.5 -rotate-90"><use href="#chev"/></svg>
    </div>
    <div class="flex h-6 items-center pl-0.5">
      <button class="h-[19px] border border-[#3f8fcd] bg-[#f6fbfe] px-0.5">Company Organizational Chart</button>
      <button class="ml-[9px]">Страница-2</button>
      <button class="ml-[14px] flex items-center gap-1">Все<svg class="h-1 w-2" viewBox="0 0 8 4"><path d="M0 4h8L4 0z"/></svg></button>
      <button class="ml-3 flex items-center gap-1.5"><svg class="size-4" viewBox="0 0 16 16"><circle cx="8" cy="8" r="8" fill="#479a7d"/><path d="M8 3.500v9M3.500 8h9" stroke="#fff" stroke-width="2"/></svg>Добавить</button>
    </div>
  </section>

  <div class="grid w-2 shrink-0 place-items-center"><svg class="h-2.5 w-[6px]" viewBox="0 0 6 10"><path d="M0 0v10l6-5z"/></svg></div>

  <!-- Properties -->
  <aside class="flex w-[350px] shrink-0 flex-col">
    <div class="flex h-[22px] items-end">
      <button class="relative z-10 -mb-px h-[22px] border border-b-0 border-[#8f8f8f] bg-white px-1">Свойства</button>
      <button class="h-5 border border-b-0 border-l-0 border-[#8f8f8f] bg-[#ececec] px-[5px]">Geometry</button>
      <button class="h-5 border border-b-0 border-l-0 border-[#8f8f8f] bg-[#ececec] px-[5px]">Текст</button>
    </div>
    <div class="flex-1 border border-[#8f8f8f] bg-white p-0.5">
      <div class="h-full border border-[#8f8f8f]">
        <button class="flex h-[25px] w-full items-center border-b border-[#a0a0a0] bg-linear-to-b from-[#dedede] to-[#f0f0f0] pl-[9px]"><svg class="h-2 w-[7px]" viewBox="0 0 7 8"><path d="M0 0v8l7-4z"/></svg>
          <svg class="mr-1.5 ml-2 size-4" viewBox="0 0 16 16"><path d="M3.500 3.500h9v9h-9z" fill="#fff" stroke="#3d6f9e"/><path d="M6.500 2L8 0l1.500 2zM6.500 14L8 16l1.500-2zM2 6.500L0 8l2 1.500zM14 6.500L16 8l-2 1.500z" fill="#3d6f9e"/></svg>Shape2D Size and Position</button>
      </div>
    </div>
  </aside>
</main>

<!-- Status bar -->
<footer class="flex h-8 shrink-0 items-center border-b border-[#dcdcdc] bg-[#fdfdfd] pl-[9px]">
  <span>СТРАНИЦА 1 ИЗ 2</span>
  <i class="ml-2 h-6 w-px bg-[#bdbdbd]"></i><i class="ml-[14px] h-6 w-px bg-[#bdbdbd]"></i>
  <span class="ml-[7px]">ШИРИНА ФИГУРЫ: 167,67 dip, ВЫСОТА: 75,00 dip, УГОЛ: 0,00 deg</span>
  <div class="ml-auto flex items-center pr-[7px]">
    <svg class="size-4" viewBox="0 0 16 16"><path d="M1.500 2.500h13v9h-13z" fill="#f4fafd" stroke="#2f5f86"/><path d="M8 11v3M4 14.500h8" stroke="#2f5f86" stroke-width="1.500"/></svg>
    <button aria-label="Уменьшить масштаб" class="ml-3"><svg class="size-4" viewBox="0 0 16 16"><circle cx="8" cy="8" r="6.500" fill="none" stroke="#4d5d6b"/><path d="M4.500 8h7" stroke="#4d5d6b"/></svg></button>
    <div class="relative mx-[14px] h-7 w-[150px]">
      <input type="range" aria-label="Масштаб" value="50" class="absolute top-0.5 left-0 h-5 w-full appearance-none bg-transparent [&::-webkit-slider-runnable-track]:h-1 [&::-webkit-slider-runnable-track]:border [&::-webkit-slider-runnable-track]:border-[#cfcfcf] [&::-webkit-slider-runnable-track]:bg-[#e6e6e6] [&::-webkit-slider-thumb]:-mt-2 [&::-webkit-slider-thumb]:h-[18px] [&::-webkit-slider-thumb]:w-[11px] [&::-webkit-slider-thumb]:appearance-none [&::-webkit-slider-thumb]:rounded-b-md [&::-webkit-slider-thumb]:border [&::-webkit-slider-thumb]:border-[#a0a0a0] [&::-webkit-slider-thumb]:bg-[#e6e6e6]">
      <div class="absolute inset-x-0 bottom-0 flex justify-between"><i class="h-[5px] w-px bg-[#8a8a8a]"></i><i class="h-[5px] w-px bg-[#8a8a8a]"></i><i class="h-[5px] w-px bg-[#8a8a8a]"></i></div>
    </div>
    <button aria-label="Увеличить масштаб"><svg class="size-4" viewBox="0 0 16 16"><circle cx="8" cy="8" r="6.500" fill="none" stroke="#4d5d6b"/><path d="M4.500 8h7M8 4.500v7" stroke="#3c6c94"/></svg></button>
    <span class="mr-3 ml-3">100%</span>
    <button aria-label="По размеру окна"><svg class="size-4" viewBox="0 0 16 16"><path d="M.5 .5h15v15H.5z" fill="none" stroke="#555"/><path d="M4.500 4.500h7v7h-7z" fill="none" stroke="#555" stroke-dasharray="1 1"/><path d="M3 3l2.500 2.500M13 3l-2.500 2.500M3 13l2.500-2.500M13 13l-2.500-2.500" stroke="#555"/></svg></button>
  </div>
</footer>

<!-- Group designer window -->
<div role="dialog" aria-labelledby="dlg" class="absolute inset-x-0 top-[141px] mx-auto flex h-[702px] w-[512px] flex-col border border-[#4b7ba5] bg-[#8ccdfb] px-1.5 pb-1.5">
  <div class="flex h-[29px] shrink-0 justify-between pr-px pl-1">
    <h2 id="dlg" class="pt-[5px] text-[15px] leading-5 text-[#16304f]">Группировать Редактор</h2>
    <button aria-label="Закрыть окно" class="grid h-5 w-[46px] place-items-center bg-[#c75050]"><svg class="size-2" viewBox="0 0 8 8"><path d="M.5 .5l7 7M7.500 .5l-7 7" stroke="#fff" stroke-width="1.500"/></svg></button>
  </div>
  <div class="flex min-h-0 flex-1 flex-col border border-[#4b7ba5] bg-[#f0f0f0] px-0.5 pt-0.5">
    <div class="flex h-[557px] gap-2">
      <div class="flex w-[180px] shrink-0 flex-col">
        <ul class="flex-1 border border-[#8f8f8f] bg-white pl-1 leading-[15px]">
          <li class="flex items-center gap-1"><svg class="size-[7px]" viewBox="0 0 7 7"><path d="M6.500 .5v6h-6z" fill="none" stroke="#222"/></svg><span class="bg-[#c5dbf5]">Group 10 - Double Section ORG</span></li>
          <li class="flex items-center gap-[3px] pl-[17px]"><svg class="h-2.5 w-1.5" viewBox="0 0 6 10"><path d="M.5 1v8l5-4z" fill="none" stroke="#999"/></svg>Controls (Control Collection)</li>
          <li class="flex items-center gap-[3px] pl-[17px]"><svg class="h-2.5 w-1.5" viewBox="0 0 6 10"><path d="M.5 1v8l5-4z" fill="none" stroke="#999"/></svg>Ports (Port Collection)</li>
          <li class="pl-[26px]">Style (Shape Style)</li>
          <li class="flex items-center gap-[3px] pl-[17px]"><svg class="h-2.5 w-1.5" viewBox="0 0 6 10"><path d="M.5 1v8l5-4z" fill="none" stroke="#999"/></svg>Shapes (Shape Collection)</li>
        </ul>
        <div class="mt-1.5 flex h-7 items-center gap-1.5 bg-[#fdfdfd] pl-1.5">
          <button aria-label="Добавить элемент"><svg class="size-4" viewBox="0 0 16 16"><path d="M8 1v14M1 8h14" stroke="#55a184" stroke-width="3.600"/></svg></button>
          <button aria-label="Удалить элемент"><svg class="size-4" viewBox="0 0 16 16"><path d="M2.500 2.500l11 11M13.500 2.500l-11 11" stroke="#be452c" stroke-width="3.600"/></svg></button>
          <button aria-label="Вверх"><svg class="size-4" viewBox="0 0 16 16"><path d="M8 16V2M2 8l6-6 6 6" stroke="#25629c" stroke-width="2.800" fill="none"/></svg></button>
          <button aria-label="Вниз"><svg class="size-4" viewBox="0 0 16 16"><path d="M8 0v14M2 8l6 6 6-6" stroke="#25629c" stroke-width="2.800" fill="none"/></svg></button>
        </div>
      </div>
      <div class="flex min-w-0 flex-1 flex-col">
        <div class="flex h-[21px] shrink-0 items-end">
          <button class="relative z-10 -mb-px h-[22px] flex-1 border border-b-0 border-[#8f8f8f] bg-white">Поведение</button>
          <button class="h-5 border-t border-r border-[#8f8f8f] bg-[#ececec] px-[5px]">Transform</button>
          <button class="h-5 border-t border-r border-[#8f8f8f] bg-[#ececec] px-[5px]">Move and Glue</button>
          <button class="h-5 border-t border-r border-[#8f8f8f] bg-[#ececec] px-[5px]">Защита</button>
          <button class="h-5 border-t border-r border-[#8f8f8f] bg-[#ececec] px-[5px]">Макет</button>
        </div>
        <form class="flex flex-1 flex-col gap-[13px] border border-[#8f8f8f] bg-white px-1.5 pt-[7px]">
          <fieldset class="border border-[#d5d5d5] px-1.5 pb-[3px]">
            <legend class="pr-0.5 leading-[14px]">Общие</legend>
            <div class="mt-[5px] flex h-[25px] items-center"><label for="nm" class="w-[31px]">Имя:</label><input id="nm" value="Double Section ORG" class="h-5 min-w-0 flex-1 border border-[#4a4a4a] px-0.5"></div>
            <label class="flex h-6 items-center gap-[3px] pl-0.5"><span class="relative size-[14px]"><input type="checkbox" checked class="peer block size-[14px] appearance-none border border-[#444] bg-white"><svg class="pointer-events-none absolute inset-0 hidden size-[14px] peer-checked:block" viewBox="0 0 14 14"><path d="M2.500 7.500l3 3L11.500 3.500" fill="none" stroke="#000" stroke-width="2"/></svg></span>Visible</label>
            <label class="flex h-6 items-center gap-[3px] pl-0.5"><span class="relative size-[14px]"><input type="checkbox" checked class="peer block size-[14px] appearance-none border border-[#444] bg-white"><svg class="pointer-events-none absolute inset-0 hidden size-[14px] peer-checked:block" viewBox="0 0 14 14"><path d="M2.500 7.500l3 3L11.500 3.500" fill="none" stroke="#000" stroke-width="2"/></svg></span>Graph Part</label>
          </fieldset>
          <fieldset class="border border-[#d5d5d5] px-1.5 pb-[3px]">
            <legend class="pr-0.5 leading-[14px]">Selection Highlighting</legend>
            <label class="mt-[5px] flex h-6 items-center gap-[3px] pl-0.5"><span class="relative size-[14px]"><input type="checkbox" checked class="peer block size-[14px] appearance-none border border-[#444] bg-white"><svg class="pointer-events-none absolute inset-0 hidden size-[14px] peer-checked:block" viewBox="0 0 14 14"><path d="M2.500 7.500l3 3L11.500 3.500" fill="none" stroke="#000" stroke-width="2"/></svg></span>Show Control Handles</label>
            <label class="flex h-6 items-center gap-[3px] pl-0.5"><span class="relative size-[14px]"><input type="checkbox" checked class="peer block size-[14px] appearance-none border border-[#444] bg-white"><svg class="pointer-events-none absolute inset-0 hidden size-[14px] peer-checked:block" viewBox="0 0 14 14"><path d="M2.500 7.500l3 3L11.500 3.500" fill="none" stroke="#000" stroke-width="2"/></svg></span>Show Shape Handles</label>
          </fieldset>
          <fieldset class="border border-[#d5d5d5] px-1.5 pb-[3px]">
            <legend class="pr-0.5 leading-[14px]">Поведение группы</legend>
            <div class="mt-[5px] flex h-[25px] items-center gap-1.5"><label for="s1" class="w-[90px] text-right">Resize in Group:</label><div class="relative flex-1"><select id="s1" class="block h-[19px] w-full appearance-none border border-[#8f8f8f] bg-white px-0.5"><option>Scale and Reposition</option></select><svg class="pointer-events-none absolute top-1.5 right-[3px] h-2 w-2.5"><use href="#chev"/></svg></div></div>
            <div class="flex h-[25px] items-center gap-1.5"><label for="s2" class="w-[90px] text-right">Resize Shapes:</label><div class="relative flex-1"><select id="s2" class="block h-[19px] w-full appearance-none border border-[#8f8f8f] bg-white px-0.5"><option>Scale and Reposition</option></select><svg class="pointer-events-none absolute top-1.5 right-[3px] h-2 w-2.5"><use href="#chev"/></svg></div></div>
            <div class="flex h-[25px] items-center gap-1.5"><label for="s3" class="w-[90px] text-right">Selection Mode:</label><div class="relative flex-1"><select id="s3" class="block h-[19px] w-full appearance-none border border-[#8f8f8f] bg-white px-0.5"><option>Group First</option></select><svg class="pointer-events-none absolute top-1.5 right-[3px] h-2 w-2.5"><use href="#chev"/></svg></div></div>
            <label class="flex h-6 items-center gap-[3px] pl-0.5"><span class="relative size-[14px]"><input type="checkbox" checked class="peer block size-[14px] appearance-none border border-[#444] bg-white"><svg class="pointer-events-none absolute inset-0 hidden size-[14px] peer-checked:block" viewBox="0 0 14 14"><path d="M2.500 7.500l3 3L11.500 3.500" fill="none" stroke="#000" stroke-width="2"/></svg></span>Snap to Shapes</label>
            <div class="flex h-[25px] items-center gap-1.5"><label for="s4" class="w-[90px] text-right whitespace-nowrap">Elements Z Order:</label><div class="relative flex-1"><select id="s4" class="block h-[19px] w-full appearance-none border border-[#8f8f8f] bg-white px-0.5"><option>Behind Shapes</option></select><svg class="pointer-events-none absolute top-1.5 right-[3px] h-2 w-2.5"><use href="#chev"/></svg></div></div>
          </fieldset>
        </form>
      </div>
    </div>
    <div class="mt-2 flex h-14 flex-col items-end border border-[#8f8f8f] bg-[#fdffe0] pt-[5px] pr-[5px]">
      <button aria-label="Закрыть подсказку"><svg class="size-2.5" viewBox="0 0 10 10"><path d="M.5 .5l9 9M9.500 .5l-9 9" stroke="#000" stroke-width="1.500"/></svg></button>
      <button class="w-2.5 pt-0.5 text-center font-bold">?</button>
    </div>
    <div class="mt-[11px] flex justify-end gap-[5px] pr-[5px]">
      <button class="h-[21px] w-12 border border-[#a3a3a3] bg-[#ececec]">ОК</button>
      <button class="h-[21px] w-[49px] border border-[#a3a3a3] bg-[#ececec]">Отмена</button>
    </div>
  </div>
</div>

<script>
  // Regular polygon or star: n tips, outer radius r, inner radius ratio k (0 for a plain polygon)
  function poly(n, r, k, turn) {
    const m = k ? n * 2 : n, out = [];
    for (let i = 0; i < m; i++) {
      const q = k && i % 2 ? r * k : r, a = -Math.PI / 2 + turn + i * 2 * Math.PI / m;
      out.push((16.5 + q * Math.cos(a)).toFixed(1) + ',' + (16.5 + q * Math.sin(a)).toFixed(1));
    }
    return '<polygon points="' + out.join(' ') + '"/>';
  }
  const shapes = [
    ['Прямоугольник', '<rect x="1" y="4.500" width="31" height="24"/>'],
    ['Квадрат', '<rect x="1" y="1" width="31" height="31"/>'],
    ['Эллипс', '<ellipse cx="16.500" cy="16.500" rx="15.500" ry="12"/>'],
    ['Круг', '<circle cx="16.500" cy="16.500" r="15.500"/>'],
    ['Скругленный прямоугольник', '<rect x="1" y="4.500" width="31" height="24" rx="7"/>'],
    ['Треугольник', '<polygon points="16.500,3 32,30 1,30"/>'],
    ['Ромб', poly(4, 15.5, 0, 0)],
    ['Пятиугольник', '<polygon points="16.500,1.500 32,13.500 26,31 7,31 1,13.500"/>'],
    ['Шестиугольник', poly(6, 15.5, 0, Math.PI / 6)],
    ['Семиугольник', poly(7, 15.8, 0, 0)],
    ['Восьмиугольник', poly(8, 16.6, 0, Math.PI / 8)],
    ['Пентаграмма', poly(5, 16, 0.38, 0)],
    ['Гексаграмма', poly(6, 15.5, 0.577, 0)],
    ['Гептаграмма', poly(7, 15.8, 0.7, 0)],
    ['Октаграмма', poly(8, 15.5, 0.7, 0)],
    ['Twenty Four Point Star', poly(24, 15.8, 0.7, 0)],
    ['Thirty Two Point Star', poly(32, 15.8, 0.72, 0)],
    ['Прямоугольный треугольник', '<polygon points="1,6 32,29 1,29"/>']
  ];
  document.getElementById('shapes').innerHTML = shapes.map(function (s, i) {
    const sel = i === 7 ? 'border-[#5b9bd0] bg-[#c4e1fd]' : 'border-transparent';
    return '<li class="flex h-[61px] items-center gap-0.5 border pl-[5px] ' + sel + '"><svg class="size-[33px] shrink-0 fill-[#90bff5] stroke-[#31587f]" viewBox="0 0 33 33">' + s[1] + '</svg><span>' + s[0] + '</span></li>';
  }).join('');

  // Vertical ruler: one block per 50 units, five minor ticks each
  let ruler = '<div class="h-5"></div>';
  for (let v = 0; v <= 700; v += 50) {
    let ticks = '';
    for (let t = 1; t < 6; t++) ticks += '<i class="ml-auto h-px w-1 bg-[#999]"></i>';
    ruler += '<div class="relative flex h-[50px] flex-col justify-evenly border-t border-[#a6a6a6]">' + ticks + '<span class="absolute top-[2px] -left-px [writing-mode:vertical-rl]">' + v + '</span></div>';
  }
  document.getElementById('ruler').innerHTML = ruler;
</script>
</body>
</html>
